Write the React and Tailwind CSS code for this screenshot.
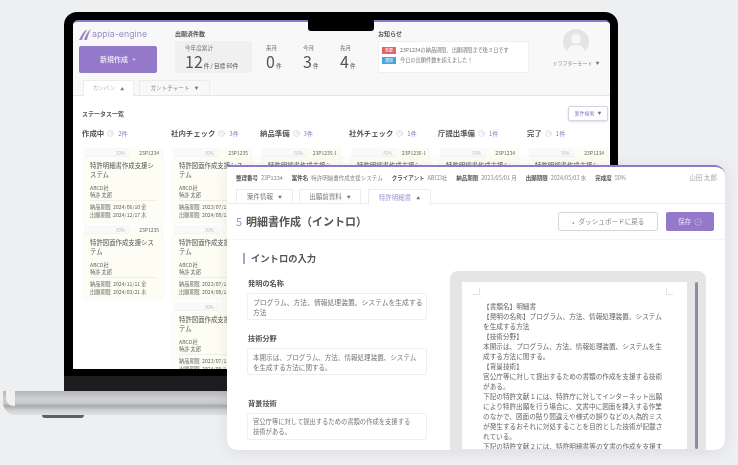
import React from 'react';
import { CircleCheck, Clock } from 'lucide-react';

const columns = [
  { name: '作成中', count: '2件', width: 'w-[89px]' },
  { name: '社内チェック', count: '3件', width: 'w-[89px]' },
  { name: '納品準備', count: '3件', width: 'w-[89px]' },
  { name: '社外チェック', count: '1件', width: 'w-[89px]' },
  { name: '庁提出準備', count: '1件', width: 'w-[89px]' },
  { name: '完了', count: '1件', width: 'w-[83px]' },
];

const cards = [
  [
    { id: '23P1234', title: '特許明細書作成支援システム', due: '2024/06/10 金', file: '2024/12/17 木' },
    { id: '23P1235', title: '特許図面作成支援システム', due: '2024/11/11 金', file: '2024/03/21 木' },
  ],
  [
    { id: '23P1235', title: '特許図面作成支援システム', due: '2023/07/11 金', file: '2024/08/11 木' },
    { id: '23P1236', title: '特許図面作成支援システム', due: '2023/07/11 金', file: '2024/08/11 木' },
    { id: '23P1237', title: '特許図面作成支援システム', due: '2023/07/11 金', file: '2024/08/11 木' },
  ],
  [{ id: '23P1235-1', title: '特許明細書作成支援システム', due: '2024/06/10 金', file: '2024/12/17 木' }],
  [{ id: '23P1236-1', title: '特許明細書作成支援システム', due: '2024/06/10 金', file: '2024/12/17 木' }],
  [{ id: '23P1234', title: '特許明細書作成支援システム', due: '2024/06/10 金', file: '2024/12/17 木' }],
  [{ id: '23P1234', title: '特許明細書作成支援システム', due: '2024/06/10 金', file: '2024/12/17 木' }],
];

const docLines = [
  '【書類名】明細書',
  '【発明の名称】プログラム、方法、情報処理装置、システム',
  'を生成する方法',
  '【技術分野】',
  '本開示は、プログラム、方法、情報処理装置、システムを生',
  '成する方法に関する。',
  '【背景技術】',
  '官公庁等に対して提出するための書類の作成を支援する技術',
  'がある。',
  '下記の特許文献１には、特許庁に対してインターネット出願',
  'により特許出願を行う場合に、文書中に図面を挿入する作業',
  'のなかで、図面の貼り間違えや様式の誤りなどの人為的ミス',
  'が発生するおそれに対処することを目的とした技術が記載さ',
  'れている。',
  '下記の特許文献２には、特許明細書等の文書の作成を支援す',
];

const Arrow = ({ up }) => (
  <span className="text-[4px] leading-none text-[#777]">{up ? '▲' : '▼'}</span>
);

const KanbanCard = ({ card }) => (
  <div className="w-[79px] ml-[2px] mb-[3px]">
    <div className="flex items-end justify-end h-[9px] bg-[#f9f9f9]">
      <span className="text-[4.5px] leading-[7px] text-[#bbb] mr-[5px]">70%</span>
      <span className="w-[31px] h-[9px] mr-[2px] bg-[#fdfdf3] text-[5px] leading-[9px] text-[#666] text-right pr-[2px]">{card.id}</span>
    </div>
    <div className="bg-[#fdfdf4] shadow-[0_0_2px_rgba(0,0,0,0.08)] px-[6px] pt-[4px] h-[65px] text-[#666]">
      <div className="text-[6.4px] leading-[9px] h-[18px] text-[#555]">{card.title}</div>
      <div className="mt-[5px] pb-[2px] border-b border-[#efefe6] text-[5.2px] leading-[7px]">
        <div>ABCD社</div>
        <div>特許 太郎</div>
      </div>
      <div className="mt-[2px] text-[5.2px] leading-[8px] whitespace-nowrap">
        <div>納品期限 &nbsp;{card.due}</div>
        <div>出願期限 &nbsp;{card.file}</div>
      </div>
    </div>
  </div>
);

const Field = ({ label, lines, size, className }) => (
  <div className={className}>
    <div className="text-[7.2px] leading-[10px] font-bold text-[#555] pl-[1px]">{label}</div>
    <div className={`mt-[5px] w-[180px] h-[27px] bg-white border border-[#efeff1] rounded-[2px] px-[5px] py-[3px] leading-[10px] text-[#777] whitespace-nowrap ${size}`}>
      {lines.map((line) => (
        <div key={line}>{line}</div>
      ))}
    </div>
  </div>
);

const App = () => {
  return (
    <div className="relative w-[738px] h-[465px] overflow-hidden bg-[#eeeff1] pt-[12px] font-['Noto_Sans_CJK_JP','Noto_Sans',sans-serif] blur-[0.6px]">
      {/* Laptop lid */}
      <div className="relative ml-[64px] w-[554px] h-[379px] bg-black rounded-t-[13px] px-[9px] pt-[8px] flex flex-col">
        <div className="absolute z-10 left-[244px] top-0 w-[66px] h-[19px] bg-black rounded-b-[3px]" />
        <div className="h-[349px] mr-[-1px] bg-white border-t-2 border-[#8f78c6] rounded-t-[5px] overflow-hidden">
          {/* Header */}
          <div className="h-[74px] bg-[#f8f8f9] border-b border-[#e6e6e8] flex flex-col">
            <div className="h-[59px] flex pl-[6px]">
              <div className="w-[78px]">
                <div className="h-[24px] flex items-center">
                  <svg width="12" height="11" viewBox="0 0 12 11" className="mt-[1px] shrink-0">
                    <path d="M0 11 C2 7 4 3 7 1 L8 1 C6 4 4 8 3 11Z M5 11 C6 7 8 3 12 0 C10 4 8.500 8 8 11Z" fill="#9a8ac8" />
                  </svg>
                  <span className="ml-[1px] text-[8.8px] text-[#9a90c4] font-['Inter',sans-serif]">appia-engine</span>
                </div>
                <div className="h-[27px] bg-[#9478c9] rounded-[2px] flex items-center justify-center gap-[4px] text-[7px] font-bold text-[#e6def3]">
                  新規作成 <span className="font-normal">+</span>
                </div>
              </div>
              <div className="ml-[18px] w-[77px]">
                <div className="h-[19px] flex items-center pt-[3px] text-[6px] font-bold text-[#555]">出願済件数</div>
                <div className="h-[32px] bg-[#f0f0f1] rounded-[2px] pl-[10px] pt-[4px] text-[#555]">
                  <div className="text-[5.6px] leading-[7px] text-[#777]">今年度累計</div>
                  <div className="text-[16px] leading-[19px] whitespace-nowrap">
                    12<span className="text-[5.6px] ml-[1px]">件 / 目標 60件</span>
                  </div>
                </div>
              </div>
              <div className="ml-[14px] mt-[19px] flex text-[#555]">
                {[['来月', '0'], ['今月', '3'], ['先月', '4']].map(([label, value]) => (
                  <div key={label} className="w-[37px] h-[32px] pt-[4px]">
                    <div className="text-[5.6px] leading-[7px] text-[#777]">{label}</div>
                    <div className="text-[16px] leading-[19px]">
                      {value}<span className="text-[5.6px] ml-[1px]">件</span>
                    </div>
                  </div>
                ))}
              </div>
              <div className="ml-[1px] w-[151px]">
                <div className="h-[19px] flex items-center pt-[3px] text-[6px] font-bold text-[#555]">お知らせ</div>
                <div className="h-[32px] bg-white rounded-[2px] border border-[#efeff1] pl-[3px] pt-[4px] text-[5.2px] text-[#777]">
                  <div className="flex items-center h-[8px] gap-[4px]">
                    <span className="w-[14px] h-[7px] bg-[#e0656b] text-white text-[4px] leading-[7px] text-center">重要</span>
                    23P1234の納品期限、出願期限まで後３日です
                  </div>
                  <div className="flex items-center h-[8px] mt-[2px] gap-[4px]">
                    <span className="w-[14px] h-[7px] bg-[#4aa3dc] text-white text-[4px] leading-[7px] text-center">通知</span>
                    今日の出願件数を超えました！
                  </div>
                </div>
              </div>
              <div className="ml-[22px] w-[50px] flex flex-col items-center pt-[7px]">
                <div className="relative w-[26px] h-[26px] rounded-full bg-[#e4e4e6] overflow-hidden">
                  <div className="absolute left-[8px] top-[5px] w-[10px] h-[10px] rounded-full bg-[#f6f6f7]" />
                  <div className="absolute left-[4px] top-[16px] w-[18px] h-[14px] rounded-full bg-[#f6f6f7]" />
                </div>
                <div className="mt-[4px] flex items-center gap-[3px] text-[5px] text-[#888] whitespace-nowrap">
                  ドラフターモード <Arrow />
                </div>
              </div>
            </div>
            <div className="h-[15px] flex pl-[10px] gap-[5px] text-[5.6px] text-[#888]">
              <div className="w-[51px] h-[16px] bg-white border border-[#ececee] border-b-0 flex items-center justify-center gap-[5px] text-[#aaa]">
                カンバン <Arrow up />
              </div>
              <div className="w-[71px] h-[15px] border border-[#ececee] border-b-0 flex items-center justify-center gap-[5px]">
                ガントチャート <Arrow />
              </div>
            </div>
          </div>
          {/* Board */}
          <div className="pl-[9px]">
            <div className="h-[37px] flex items-center justify-between pr-[2px] pt-[1px]">
              <span className="text-[6px] font-bold text-[#555] mt-[-4px]">ステータス一覧</span>
              <div className="w-[40px] h-[15px] mt-[-4px] bg-white border border-[#d6d3e4] rounded-[2px] shadow-sm flex items-center justify-center gap-[3px] text-[5px] text-[#8a78c4]">
                案件検索 <Arrow />
              </div>
            </div>
            <div className="flex">
              {columns.map((col, i) => (
                <div key={col.name} className={col.width}>
                  <div className="h-[14px] flex items-center gap-[3px] mt-[-7px] mb-[8px] whitespace-nowrap">
                    <span className="text-[7.4px] font-bold text-[#555]">{col.name}</span>
                    <Clock size={7} strokeWidth={1} className="text-[#9a90c4]" />
                    <span className="text-[6px] ml-[1px] text-[#8a78c4]">{col.count}</span>
                  </div>
                  {cards[i].map((card, j) => (
                    <KanbanCard key={j} card={card} />
                  ))}
                </div>
              ))}
            </div>
          </div>
        </div>
        <div className="h-[7px] bg-black" />
        <div className="mx-[-9px] h-[15px] bg-[#1d1d1f]" />
      </div>

      {/* Laptop base */}
      <div className="relative ml-[3px] w-[690px] h-[24px] rounded-bl-[13px] overflow-hidden bg-[linear-gradient(to_bottom,#b4b6b8_0%,#cfd0d1_35%,#c6c7c8_52%,#a6a8aa_62%,#d0d1d2_80%,#dfe0e1_100%)]">
        <div className="absolute left-[3px] top-0 w-[9px] h-[15px] bg-[#f0f0f1] rounded-bl-[8px]" />
      </div>
      <div className="ml-[42px] w-[42px] h-[3px] bg-[#5f5f63] rounded-b-[3px]" />

      {/* Front window */}
      <div className="absolute left-[227px] top-[165px] w-[498px] h-[285px] bg-white border-t-2 border-[#8f78c6] rounded-[10px] rounded-tl-none overflow-hidden shadow-[0_2px_14px_rgba(60,60,80,0.10)]">
        <div className="h-[22px] flex items-center justify-between pl-[9px] pr-[8px] text-[5.5px] text-[#888] whitespace-nowrap">
          <div className="flex gap-[9px]">
            <span><b className="text-[#555] mr-[3px]">整理番号</b>23P1234</span>
            <span><b className="text-[#555] mr-[3px]">案件名</b>特許明細書作成支援システム</span>
            <span><b className="text-[#555] mr-[3px]">クライアント</b>ABCD社</span>
            <span><b className="text-[#555] mr-[3px]">納品期限</b>2023/05/01 月</span>
            <span><b className="text-[#555] mr-[3px]">出願期限</b>2024/05/03 水</span>
            <span><b className="text-[#555] mr-[3px]">完成度</b>50%</span>
          </div>
          <span className="text-[6.6px] text-[#aaa]">山田 太郎</span>
        </div>
        <div className="h-[15px] flex pl-[9px] border-b border-[#ececee] text-[6.5px] text-[#777]">
          <div className="w-[57px] h-[15px] border border-b-0 border-[#ececee] flex items-center justify-center gap-[5px]">
            案件情報 <Arrow />
          </div>
          <div className="ml-[6px] w-[62px] h-[15px] border border-b-0 border-[#ececee] flex items-center justify-center gap-[5px]">
            出願前資料 <Arrow />
          </div>
          <div className="ml-[7px] w-[63px] h-[16px] bg-white border border-b-0 border-[#ececee] flex items-center justify-center gap-[5px] text-[#a294d2]">
            特許明細書 <Arrow up />
          </div>
        </div>
        <div className="h-[36px] flex items-center border-b border-[#f5f5f6] pl-[9px] pr-[11px]">
          <span className="text-[11px] text-[#a294d2] mr-[4px]">5</span>
          <span className="text-[11px] font-bold text-[#555]">明細書作成（イントロ）</span>
          <div className="ml-auto w-[100px] h-[19px] bg-white border border-[#d6d6dc] rounded-[2px] flex items-center justify-center gap-[5px] text-[6.6px] text-[#888]">
            <span className="text-[4px]">◂</span> ダッシュボードに戻る
          </div>
          <div className="ml-[8px] w-[48px] h-[19px] bg-[#9478c9] rounded-[2px] flex items-center justify-center gap-[3px] text-[6.6px] text-[#e6def3]">
            保存 <CircleCheck size={8} strokeWidth={1.2} />
          </div>
        </div>
        <div className="flex">
          <div className="w-[223px] shrink-0 pl-[20px]">
            <div className="mt-[13px] ml-[-4px] border-l-2 border-[#a9a3c8] h-[11px] pl-[6px] flex items-center text-[9.3px] font-bold text-[#555]">
              イントロの入力
            </div>
            <Field className="mt-[14px]" label="発明の名称" size="text-[6.8px]" lines={['プログラム、方法、情報処理装置、システムを生成する', '方法']} />
            <Field className="mt-[13px]" label="技術分野" size="text-[6.55px]" lines={['本開示は、プログラム、方法、情報処理装置、システム', 'を生成する方法に関する。']} />
            <Field className="mt-[23px]" label="背景技術" size="text-[6.3px]" lines={['官公庁等に対して提出するための書類の作成を支援する', '技術がある。']} />
          </div>
          <div className="mt-[31px] w-[256px] h-[180px] bg-[#e5e5e6] rounded-t-[8px] pl-[12px] pt-[11px] flex">
            <div className="relative w-[225px] h-[167px] overflow-hidden bg-white pl-[21px] pt-[19px] text-[6.65px] leading-[10px] text-[#666] whitespace-nowrap">
              <div className="absolute left-[11px] top-[6px] w-[7px] h-[7px] border-r border-b border-[#e4e4e4]" />
              <div className="absolute right-[14px] top-[6px] w-[7px] h-[7px] border-l border-b border-[#e4e4e4]" />
              {docLines.map((line) => (
                <div key={line}>{line}</div>
              ))}
            </div>
            <div className="ml-[8px] w-[3px] h-[167px] bg-[#8f8aa8] rounded-full" />
          </div>
        </div>
      </div>
    </div>
  );
};

export default App;
